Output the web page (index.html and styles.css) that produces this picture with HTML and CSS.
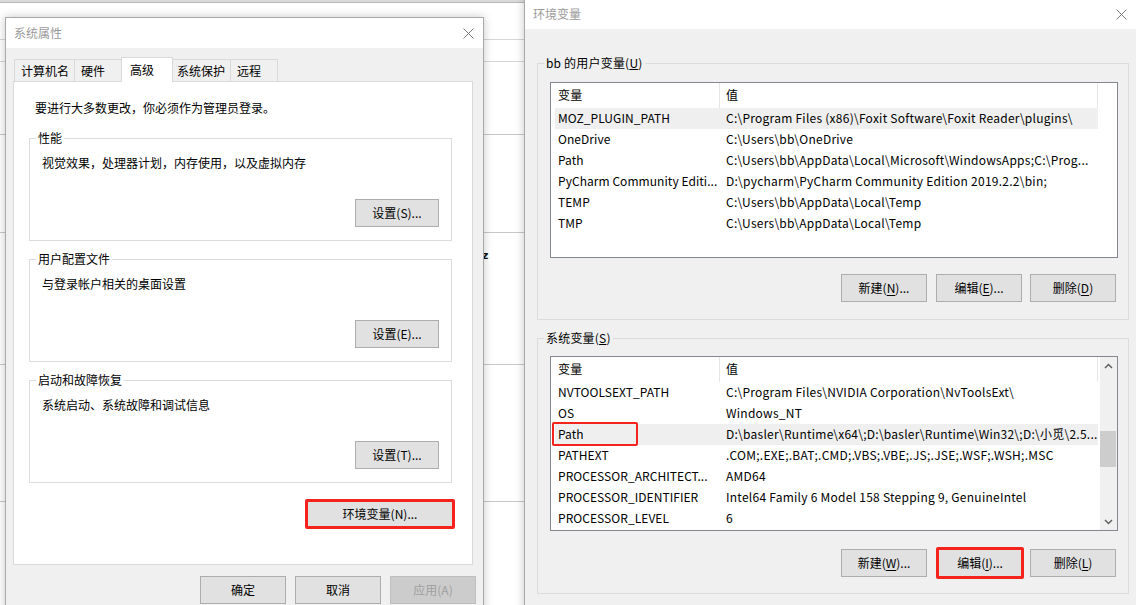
FILE: index.html
```html
<!DOCTYPE html>
<html lang="zh-CN">
<head>
<meta charset="utf-8">
<title>系统属性 - 环境变量</title>
<link rel="stylesheet" href="styles.css">
</head>
<body>
<div class="desktop">
  <span class="bg-z">z</span>

  <section class="win win-sys">
    <header class="titlebar">
      <span class="title">系统属性</span>
      <svg class="close" width="11" height="11" viewBox="0 0 11 11"><path d="M0.5 0.5L10.5 10.5M10.5 0.5L0.5 10.5" stroke="#7a7a7a" stroke-width="1" fill="none"/></svg>
    </header>
    <div class="win-body">
      <div class="tabs">
        <div class="tab">计算机名</div>
        <div class="tab">硬件</div>
        <div class="tab tab-on">高级</div>
        <div class="tab">系统保护</div>
        <div class="tab">远程</div>
      </div>
      <div class="panel">
        <p class="note">要进行大多数更改，你必须作为管理员登录。</p>
        <fieldset class="grp">
          <legend>性能</legend>
          <p class="desc">视觉效果，处理器计划，内存使用，以及虚拟内存</p>
          <div class="row-end"><button class="btn btn-set">设置(S)...</button></div>
        </fieldset>
        <fieldset class="grp">
          <legend>用户配置文件</legend>
          <p class="desc">与登录帐户相关的桌面设置</p>
          <div class="row-end"><button class="btn btn-set">设置(E)...</button></div>
        </fieldset>
        <fieldset class="grp">
          <legend>启动和故障恢复</legend>
          <p class="desc">系统启动、系统故障和调试信息</p>
          <div class="row-end"><button class="btn btn-set">设置(T)...</button></div>
        </fieldset>
        <div class="row-end env-row"><button class="btn btn-env">环境变量(N)...</button></div>
      </div>
      <div class="dlg-btns">
        <button class="btn btn-dlg">确定</button>
        <button class="btn btn-dlg">取消</button>
        <button class="btn btn-dlg btn-off">应用(A)</button>
      </div>
    </div>
  </section>

  <section class="win win-env">
    <header class="titlebar">
      <span class="title">环境变量</span>
      <svg class="close" width="11" height="11" viewBox="0 0 11 11"><path d="M0.5 0.5L10.5 10.5M10.5 0.5L0.5 10.5" stroke="#7a7a7a" stroke-width="1" fill="none"/></svg>
    </header>
    <div class="win-body env-body">
      <fieldset class="vgrp vgrp-user">
        <legend>bb 的用户变量(<u>U</u>)</legend>
        <div class="list list-user">
          <div class="list-main">
            <div class="lhead"><span class="hc hc-name">变量</span><span class="hc hc-val">值</span></div>
            <div class="lrow lrow-on"><span class="c-name">MOZ_PLUGIN_PATH</span><span class="c-val">C:\Program Files (x86)\Foxit Software\Foxit Reader\plugins\</span></div>
            <div class="lrow"><span class="c-name">OneDrive</span><span class="c-val">C:\Users\bb\OneDrive</span></div>
            <div class="lrow"><span class="c-name">Path</span><span class="c-val">C:\Users\bb\AppData\Local\Microsoft\WindowsApps;C:\Prog...</span></div>
            <div class="lrow"><span class="c-name">PyCharm Community Editi...</span><span class="c-val">D:\pycharm\PyCharm Community Edition 2019.2.2\bin;</span></div>
            <div class="lrow"><span class="c-name">TEMP</span><span class="c-val">C:\Users\bb\AppData\Local\Temp</span></div>
            <div class="lrow"><span class="c-name">TMP</span><span class="c-val">C:\Users\bb\AppData\Local\Temp</span></div>
          </div>
        </div>
        <div class="vbtns">
          <button class="btn btn-v btn-first">新建(<u>N</u>)...</button>
          <button class="btn btn-v">编辑(<u>E</u>)...</button>
          <button class="btn btn-v">删除(<u>D</u>)</button>
        </div>
      </fieldset>

      <fieldset class="vgrp vgrp-sys">
        <legend>系统变量(<u>S</u>)</legend>
        <div class="list list-sys">
          <div class="list-main">
            <div class="lhead"><span class="hc hc-name">变量</span><span class="hc hc-val">值</span></div>
            <div class="lrow"><span class="c-name">NVTOOLSEXT_PATH</span><span class="c-val">C:\Program Files\NVIDIA Corporation\NvToolsExt\</span></div>
            <div class="lrow"><span class="c-name">OS</span><span class="c-val">Windows_NT</span></div>
            <div class="lrow lrow-on lrow-mark"><span class="c-name">Path</span><span class="c-val">D:\basler\Runtime\x64\;D:\basler\Runtime\Win32\;D:\小觅\2.5...</span><span class="mark"></span></div>
            <div class="lrow"><span class="c-name">PATHEXT</span><span class="c-val">.COM;.EXE;.BAT;.CMD;.VBS;.VBE;.JS;.JSE;.WSF;.WSH;.MSC</span></div>
            <div class="lrow"><span class="c-name">PROCESSOR_ARCHITECT...</span><span class="c-val">AMD64</span></div>
            <div class="lrow"><span class="c-name">PROCESSOR_IDENTIFIER</span><span class="c-val">Intel64 Family 6 Model 158 Stepping 9, GenuineIntel</span></div>
            <div class="lrow"><span class="c-name">PROCESSOR_LEVEL</span><span class="c-val">6</span></div>
          </div>
          <div class="vscroll">
            <div class="sb-btn"><svg width="9" height="6" viewBox="0 0 9 6"><path d="M1 5L4.5 1.5L8 5" fill="none" stroke="#606060" stroke-width="1.5"/></svg></div>
            <div class="sb-track"><div class="sb-thumb"></div></div>
            <div class="sb-btn"><svg width="9" height="6" viewBox="0 0 9 6"><path d="M1 1L4.5 4.5L8 1" fill="none" stroke="#606060" stroke-width="1.5"/></svg></div>
          </div>
        </div>
        <div class="vbtns">
          <button class="btn btn-v btn-first">新建(<u>W</u>)...</button>
          <button class="btn btn-v btn-red">编辑(<u>I</u>)...</button>
          <button class="btn btn-v">删除(<u>L</u>)</button>
        </div>
      </fieldset>
    </div>
  </section>
</div>
</body>
</html>
```

FILE: styles.css
```css
* { box-sizing: border-box; }

html, body {
  margin: 0;
  padding: 0;
  background: #ffffff;
}

body {
  font-family: "Noto Sans CJK SC", "Noto Sans", sans-serif;
  font-size: 12px;
  line-height: 16px;
  color: #000;
}

p { margin: 0; }

.desktop {
  position: relative;
  width: 1136px;
  height: 605px;
  overflow: hidden;
  background:
    linear-gradient(#b8b8b8, #b8b8b8) 0 2px / 100% 1px no-repeat,
    linear-gradient(#dadada, #dadada) 0 0 / 100% 2px no-repeat,
    linear-gradient(#d6d6d6, #d6d6d6) 0 39px / 100% 1px no-repeat,
    linear-gradient(#d6d6d6, #d6d6d6) 0 61px / 100% 1px no-repeat,
    linear-gradient(#c8c8c8, #c8c8c8) 0 134px / 100% 1px no-repeat,
    linear-gradient(#c8c8c8, #c8c8c8) 0 232px / 100% 1px no-repeat,
    linear-gradient(#c8c8c8, #c8c8c8) 0 364px / 100% 1px no-repeat,
    linear-gradient(#c8c8c8, #c8c8c8) 0 501px / 100% 1px no-repeat,
    #ffffff;
}

.bg-z {
  position: absolute;
  left: 482px;
  top: 248px;
  font-family: "DejaVu Sans", sans-serif;
  font-size: 11px;
  font-weight: bold;
  color: #111;
}

/* ---------- windows ---------- */
.win {
  position: absolute;
  display: flex;
  flex-direction: column;
  border: 1px solid #a9a9a9;
  background: #f0f0f0;
  box-shadow: 0 0 9px rgba(0, 0, 0, 0.22);
}

.win-sys {
  left: 5px;
  top: 17px;
  width: 479px;
  height: 620px;
  z-index: 1;
}

.win-env {
  left: 524px;
  top: -2px;
  width: 614px;
  height: 640px;
  z-index: 2;
}

.titlebar {
  flex: 0 0 30px;
  height: 30px;
  background: #ffffff;
  display: flex;
  align-items: center;
  justify-content: space-between;
  padding: 0 9px 0 8px;
}

.win-env .titlebar { padding-left: 8px; padding-right: 10px; }

.title {
  color: #9a9a9a;
  font-size: 12px;
}

.close { display: block; }

.win-body {
  flex: 1;
  display: flex;
  flex-direction: column;
  align-items: flex-start;
  padding: 9px 0 0 7px;
}

/* ---------- tabs ---------- */
.tabs {
  display: flex;
  align-items: flex-end;
  margin-left: 1px;
  position: relative;
  z-index: 2;
}

.tab {
  height: 22px;
  min-width: 48px;
  padding: 2px 5px 0 6px;
  line-height: 18px;
  border: 1px solid #d9d9d9;
  border-bottom: none;
  background: #f0f0f0;
  white-space: nowrap;
}

.tab + .tab { margin-left: -1px; }

.tab-on {
  position: relative;
  z-index: 3;
  height: 25px;
  min-width: 52px;
  margin-bottom: -1px;
  margin-right: -2px;
  padding: 3px 5px 0 8px;
  background: #ffffff;
}

.panel {
  position: relative;
  z-index: 1;
  width: 460px;
  height: 484px;
  background: #ffffff;
  border: 1px solid #d9d9d9;
  display: flex;
  flex-direction: column;
}

.note {
  margin: 18px 0 0 21px;
}

.grp {
  margin: 14px 20px 0 15px;
  padding: 9px 12px 13px 12px;
  border: 1px solid #dcdcdc;
  min-width: 0;
}

.grp + .grp { margin-top: 10px; }

.grp legend,
.vgrp legend {
  padding: 0 2px;
  margin-left: -6px;
  line-height: 16px;
}

.vgrp legend { letter-spacing: 0.2px; }

.row-end {
  display: flex;
  justify-content: flex-end;
}

.grp .row-end { margin-top: 28px; }

.env-row {
  margin-top: 16px;
  padding-right: 17px;
}

/* ---------- buttons ---------- */
.btn {
  font-family: inherit;
  font-size: 12px;
  line-height: 16px;
  color: #000;
  background: #e1e1e1;
  border: 1px solid #adadad;
  border-radius: 0;
  padding: 0;
  margin: 0;
  height: 28px;
  text-align: center;
  white-space: nowrap;
}

.btn u { text-underline-offset: 2px; }

.btn-set { width: 84px; }

.btn-env {
  width: 150px;
  height: 30px;
  border: 3px solid #f4231c;
  border-radius: 2px;
}

.dlg-btns {
  display: flex;
  gap: 9px;
  margin-top: 11px;
  align-self: flex-end;
  margin-right: 7px;
}

.btn-dlg { width: 86px; }

.btn-off {
  background: #cccccc;
  border-color: #bfbfbf;
  color: #a0a0a0;
}

/* ---------- env window ---------- */
.env-body {
  padding: 26px 0 0 0;
  align-items: stretch;
}

.vgrp {
  margin: 0 8px 0 12px;
  padding: 0 10px 17px 12px;
  border: 1px solid #dcdcdc;
  min-width: 0;
}

.vgrp-sys {
  margin-top: 10px;
  padding-bottom: 14px;
}

.list {
  display: flex;
  height: 175px;
  background: #ffffff;
  border: 1px solid #828790;
  overflow: hidden;
  letter-spacing: 0.25px;
}

.list-user { margin-top: 11px; height: 176px; }
.list-sys { margin-top: 10px; }

.list-main {
  flex: 1;
  min-width: 0;
  margin-right: 19px;
}

.list-sys .list-main { margin-right: 2px; }

.lhead {
  display: flex;
  height: 25px;
}

.hc {
  display: flex;
  align-items: center;
  height: 25px;
  padding-bottom: 1px;
  border-right: 1px solid #e5e5e5;
  white-space: nowrap;
}

.hc-name {
  width: 169px;
  padding-left: 7px;
}

.hc-val {
  flex: 1;
  padding-left: 6px;
}

.lrow {
  position: relative;
  display: flex;
  height: 21px;
  align-items: center;
  padding-bottom: 1px;
  margin-left: 4px;
  white-space: nowrap;
}

.lrow-on { background: #efefef; }

.c-name {
  flex: 0 0 165px;
  width: 165px;
  padding-left: 3px;
  overflow: hidden;
  letter-spacing: 0.05px;
}

.c-val {
  flex: 1;
  min-width: 0;
  padding-left: 6px;
  overflow: hidden;
}

.mark {
  position: absolute;
  left: -3px;
  top: -2px;
  width: 86px;
  height: 24px;
  border: 2px solid #f4231c;
  border-radius: 2px;
}

.vscroll {
  flex: 0 0 17px;
  width: 17px;
  display: flex;
  flex-direction: column;
  background: #f0f0f0;
}

.sb-btn {
  height: 17px;
  display: flex;
  align-items: center;
  justify-content: center;
}

.sb-track {
  flex: 1;
}

.sb-thumb {
  margin: 57px 1px 0 0;
  height: 36px;
  background: #cdcdcd;
}

.vbtns {
  display: flex;
  align-items: center;
  justify-content: flex-end;
  gap: 8px;
  margin-top: 16px;
  margin-right: 2px;
}

.btn-v { width: 86px; }

.btn-first { margin-right: 1px; }

.btn-red {
  width: 88px;
  height: 32px;
  border: 3px solid #f4231c;
  border-radius: 2px;
  margin-right: -2px;
}
```
